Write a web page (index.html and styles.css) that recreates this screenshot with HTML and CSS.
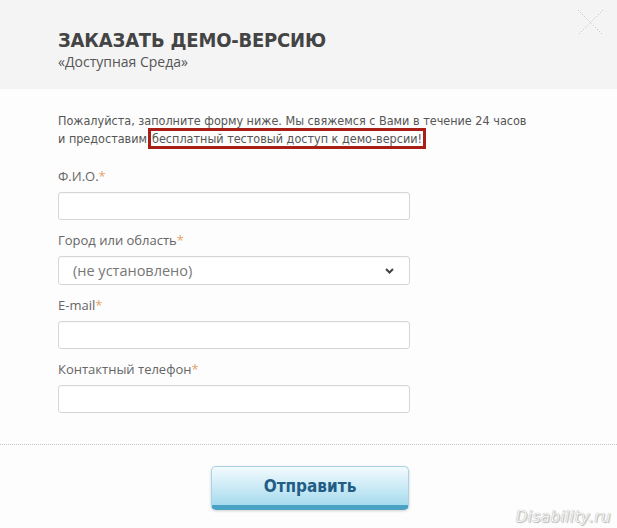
FILE: index.html
```html
<!DOCTYPE html>
<html lang="ru">
<head>
<meta charset="utf-8">
<title>Заказать демо-версию</title>
<link rel="stylesheet" href="styles.css">
</head>
<body>
<div class="modal">
  <header class="head">
    <h1 class="title">ЗАКАЗАТЬ ДЕМО-ВЕРСИЮ</h1>
    <p class="subtitle">«Доступная Среда»</p>
    <button class="close" type="button" aria-label="Закрыть">
      <svg width="27" height="27" viewBox="0 0 27 27"><path d="M1 1 L26 26 M26 1 L1 26" stroke="#b9b9b9" stroke-width="1" stroke-dasharray="1 2" fill="none"/></svg>
    </button>
  </header>
  <form class="body">
    <p class="intro">Пожалуйста, заполните форму ниже. Мы свяжемся с Вами в течение 24 часов и предоставим<span class="mark">бесплатный тестовый доступ к демо-версии!</span></p>
    <div class="fields">
      <div class="field">
        <label class="label">Ф.И.О.<span class="req">*</span></label>
        <div class="input"></div>
      </div>
      <div class="field">
        <label class="label">Город или область<span class="req">*</span></label>
        <div class="input select"><span class="ph">(не установлено)</span>
          <svg class="chev" width="9" height="6" viewBox="0 0 9 6"><path d="M1 1 L4.5 4.5 L8 1" stroke="#444" stroke-width="2" fill="none"/></svg>
        </div>
      </div>
      <div class="field">
        <label class="label">E-mail<span class="req">*</span></label>
        <div class="input"></div>
      </div>
      <div class="field">
        <label class="label">Контактный телефон<span class="req">*</span></label>
        <div class="input"></div>
      </div>
    </div>
  </form>
  <div class="foot">
    <button class="submit" type="button">Отправить</button>
  </div>
  <div class="watermark">Disability.ru</div>
</div>
</body>
</html>
```
FILE: styles.css
```css
html, body {
  margin: 0;
  padding: 0;
  background: #fdfdfd;
}
.modal {
  position: relative;
  width: 617px;
  height: 528px;
  overflow: hidden;
  background: #fdfdfd;
}
.head {
  position: relative;
  background: #f4f4f4;
  height: 89px;
  box-sizing: border-box;
  padding: 28px 58px 0;
}
.title {
  margin: 0;
  font-family: "DejaVu Sans Condensed", "DejaVu Sans", sans-serif;
  font-weight: bold;
  font-size: 20px;
  line-height: 24px;
  color: #444;
  letter-spacing: -0.2px;
}
.subtitle {
  margin: 1px 0 0;
  font-family: "Open Sans", sans-serif;
  font-size: 14px;
  line-height: 18px;
  color: #555;
}
.close {
  position: absolute;
  top: 9px;
  right: 13px;
  padding: 0;
  border: 0;
  background: none;
  line-height: 0;
}
.body {
  margin: 0;
  padding: 23px 58px 0;
  height: 356px;
  box-sizing: border-box;
  border-bottom: 1px dotted #c4c4c4;
}
.intro {
  margin: 0;
  font-family: "DejaVu Sans Condensed", "DejaVu Sans", sans-serif;
  font-size: 12.5px;
  line-height: 18px;
  color: #555;
  width: 470px;
}
.mark {
  border: 3px solid #a91f17;
  padding: 0 1px;
  margin-left: 1px;
}
.fields {
  margin-top: 19px;
  display: flex;
  flex-direction: column;
  gap: 11px;
  width: 352px;
}
.field {
  display: flex;
  flex-direction: column;
  gap: 7px;
}
.label {
  font-family: "Open Sans", sans-serif;
  font-size: 13px;
  line-height: 18px;
  color: #666;
}
.req {
  color: #e8a06a;
}
.input {
  height: 28px;
  box-sizing: border-box;
  border: 1px solid #d6d6d6;
  border-radius: 3px;
  background: #fff;
  box-shadow: inset 0 1px 1px rgba(0,0,0,0.03);
}
.select {
  height: 29px;
  display: flex;
  align-items: center;
  justify-content: space-between;
  padding: 0 15px 0 14px;
}
.ph {
  font-family: "Open Sans", sans-serif;
  font-size: 14.5px;
  color: #777;
}
.foot {
  display: flex;
  justify-content: center;
  padding: 21px 0 0 3px;
}
.submit {
  width: 198px;
  height: 44px;
  box-sizing: border-box;
  border: 1px solid #a9d3e2;
  border-bottom: 5px solid #4aa3c4;
  border-radius: 5px;
  background: linear-gradient(#f3fbfe, #a7dbee);
  box-shadow: 0 1px 3px rgba(0,0,0,0.18);
  font-family: "DejaVu Sans Condensed", "DejaVu Sans", sans-serif;
  font-weight: bold;
  font-size: 17px;
  color: #235d86;
  padding: 0 0 1px;
}
.watermark {
  position: absolute;
  right: 6px;
  bottom: 2px;
  font-family: "DejaVu Sans", sans-serif;
  font-style: italic;
  font-size: 15px;
  color: #f4f4f4;
  text-shadow: 0 0 1px #999, 1px 1px 1px #bbb;
  letter-spacing: 0.5px;
}
```
